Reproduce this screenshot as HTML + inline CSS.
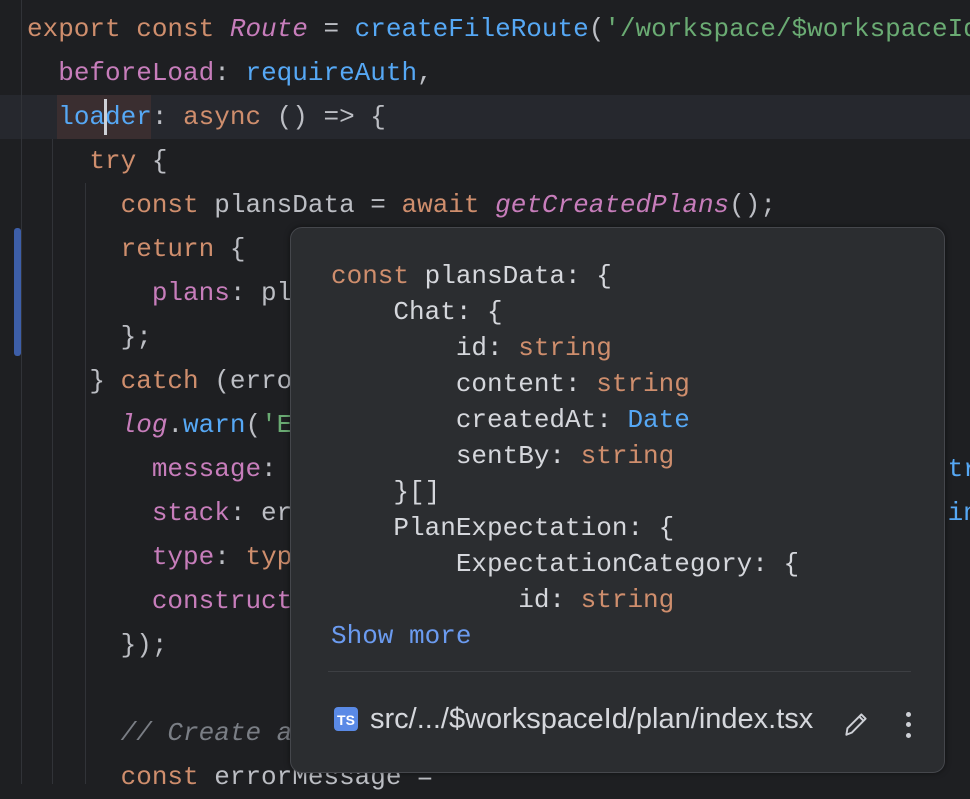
<!DOCTYPE html>
<html><head><meta charset="utf-8"><style>
body{margin:0;width:970px;height:784px;background:#1e1f22;overflow:hidden;position:relative;font-family:"Liberation Mono",monospace;}
.l{position:absolute;left:27px;height:44px;line-height:44px;font-size:26px;white-space:pre;color:#bcbec4;}
.k{color:#cf8e6d}.p{color:#c77dbb}.b{color:#56a8f5}.s{color:#6aab73}.c{color:#7a7e85;font-style:italic}.i{font-style:italic}
.g{position:absolute;width:1px;background:#313338}
#pop{position:absolute;left:290px;top:227px;width:653px;height:544px;background:#2b2d30;border:1px solid #45474c;border-radius:12px;box-shadow:0 0 6px rgba(0,0,0,.5)}
.q{position:absolute;left:40px;font-size:26px;line-height:36px;height:36px;white-space:pre;color:#d5d7dc}
</style></head><body>
<div style="position:absolute;left:0;top:95px;width:970px;height:44px;background:#26282e"></div>
<div style="position:absolute;left:57px;top:95px;width:94px;height:44px;background:#3a2e30"></div>
<div class="g" style="left:21px;top:0;height:784px"></div>
<div class="g" style="left:52px;top:139px;height:645px"></div>
<div class="g" style="left:85px;top:183px;height:601px"></div>
<div style="position:absolute;left:14px;top:228px;width:7px;height:128px;background:#3d5ea8;border-radius:3px"></div>
<div class="l" style="top:7px"><span class="k">export const </span><span class="p i">Route</span> = <span class="b">createFileRoute</span>(<span class="s">'/workspace/$workspaceId'</span></div>
<div class="l" style="top:51px">  <span class="p">beforeLoad</span>: <span class="b">requireAuth</span>,</div>
<div class="l" style="top:95px">  <span class="b">loader</span>: <span class="k">async</span> () => {</div>
<div style="position:absolute;left:104px;top:99px;width:3px;height:36px;background:#ced0d6"></div>
<div class="l" style="top:139px">    <span class="k">try</span> {</div>
<div class="l" style="top:183px">      <span class="k">const</span> plansData = <span class="k">await</span> <span class="p i">getCreatedPlans</span>();</div>
<div class="l" style="top:227px">      <span class="k">return</span> {</div>
<div class="l" style="top:271px">        <span class="p">plans</span>: pl</div>
<div class="l" style="top:315px">      };</div>
<div class="l" style="top:359px">    } <span class="k">catch</span> (erro</div>
<div class="l" style="top:403px">      <span class="p i">log</span>.<span class="b">warn</span>(<span class="s">'E</span></div>
<div class="l" style="top:447px">        <span class="p">message</span>:                                           <span class="b">tr</span></div>
<div class="l" style="top:491px">        <span class="p">stack</span>: er                                          <span class="b">in</span></div>
<div class="l" style="top:535px">        <span class="p">type</span>: <span class="k">typ</span></div>
<div class="l" style="top:579px">        <span class="p">construct</span></div>
<div class="l" style="top:623px">      });</div>
<div class="l" style="top:711px">      <span class="c">// Create a</span></div>
<div class="l" style="top:755px">      <span class="k">const</span> errorMessage =</div>
<div id="pop">
<div class="q" style="top:30px"><span class="k">const</span> plansData: {</div>
<div class="q" style="top:66px">    Chat: {</div>
<div class="q" style="top:102px">        id: <span class="k">string</span></div>
<div class="q" style="top:138px">        content: <span class="k">string</span></div>
<div class="q" style="top:174px">        createdAt: <span class="b">Date</span></div>
<div class="q" style="top:210px">        sentBy: <span class="k">string</span></div>
<div class="q" style="top:246px">    }[]</div>
<div class="q" style="top:282px">    PlanExpectation: {</div>
<div class="q" style="top:318px">        ExpectationCategory: {</div>
<div class="q" style="top:354px">            id: <span class="k">string</span></div>
<div class="q" style="top:390px;color:#6b9bf0">Show more</div>
<div style="position:absolute;left:37px;top:443px;width:583px;height:1px;background:#3d3f43"></div>
<div style="position:absolute;left:43px;top:479px;width:24px;height:24px;background:#5a8ae6;border-radius:4px;color:#fff;font:bold 14px 'Liberation Sans',sans-serif;line-height:26px;text-align:center">TS</div>
<div style="position:absolute;left:79px;top:472px;font:29px 'Liberation Sans',sans-serif;color:#d5d7dc;line-height:38px;white-space:nowrap">src/.../$workspaceId/plan/index.tsx</div>
<svg style="position:absolute;left:550px;top:480px" width="30" height="30" viewBox="0 0 28 28"><path d="M5 25 L6 19 L19 6 L23 10 L10 23 Z M17 8 L21 12" fill="none" stroke="#ced0d6" stroke-width="1.8" stroke-linejoin="round"/></svg>
<div style="position:absolute;left:615px;top:484px;width:5px;height:5px;border-radius:50%;background:#ced0d6"></div>
<div style="position:absolute;left:615px;top:494px;width:5px;height:5px;border-radius:50%;background:#ced0d6"></div>
<div style="position:absolute;left:615px;top:505px;width:5px;height:5px;border-radius:50%;background:#ced0d6"></div>
</div>
</body></html>
